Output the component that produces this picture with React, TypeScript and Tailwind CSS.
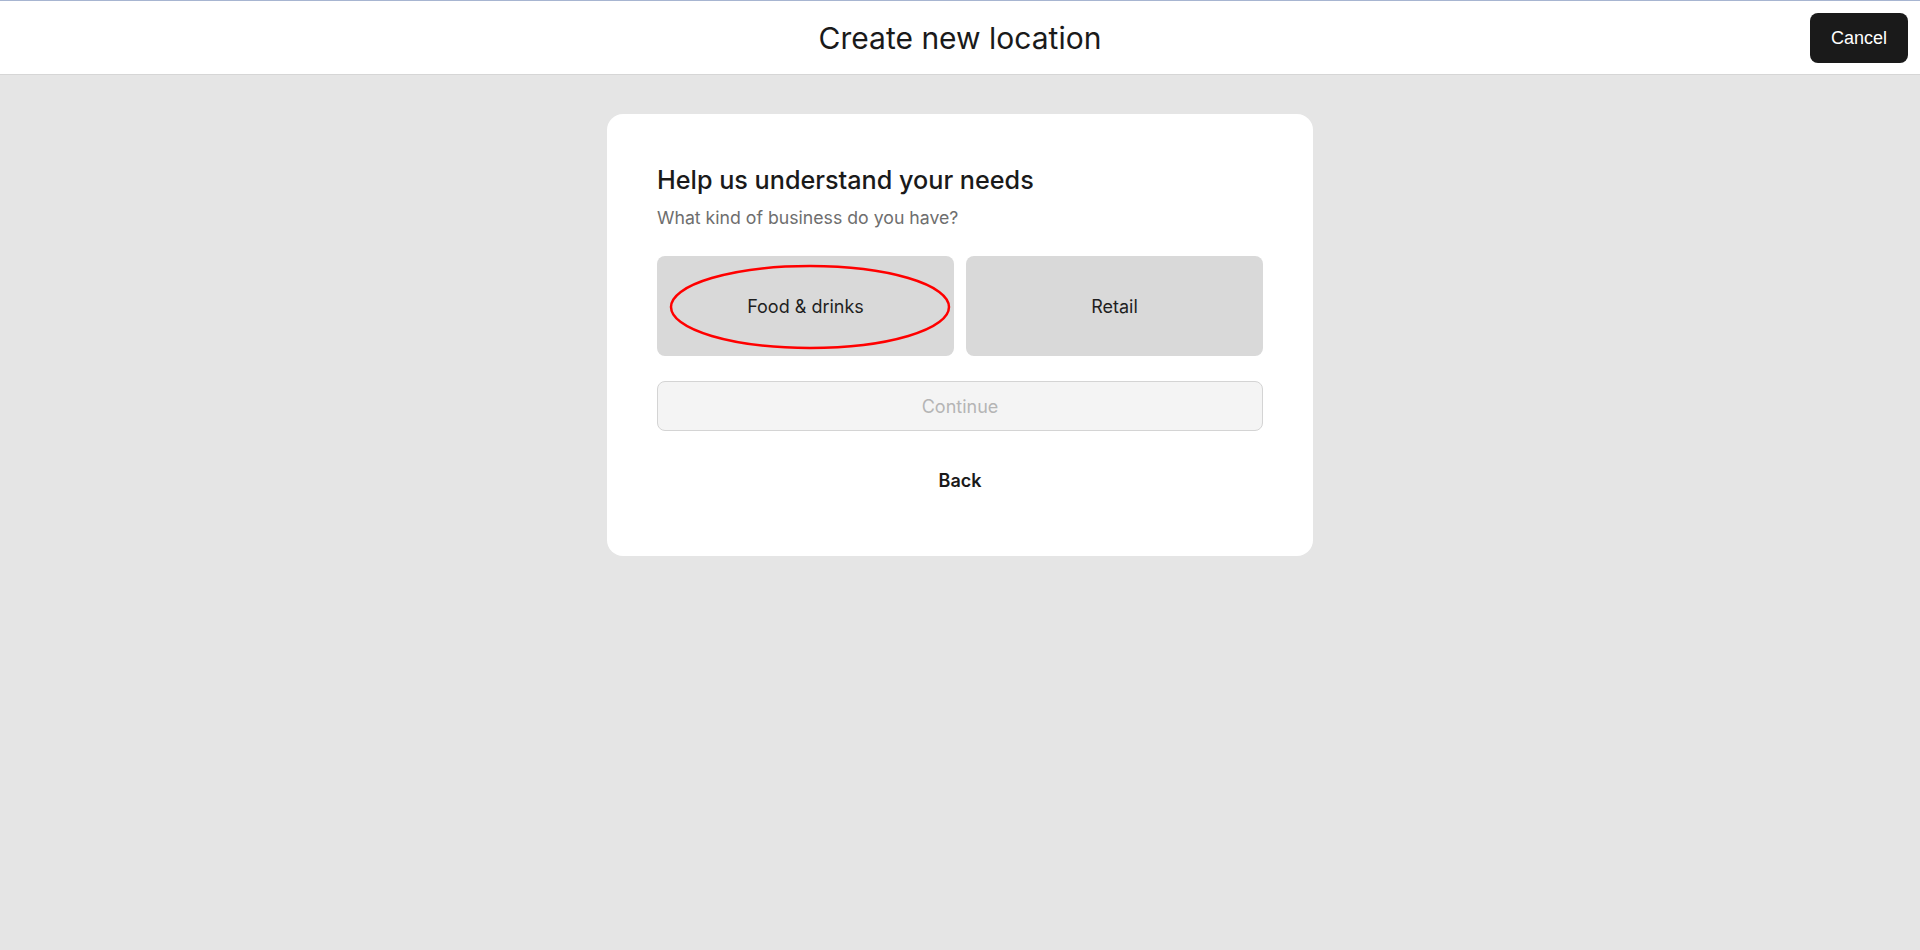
import React from "react";

export default function App() {
  return (
    <div className="min-h-[950px] w-full bg-[#e5e5e5] font-['Inter',sans-serif] text-[#1a1a1a]">
      <header className="relative flex h-[75px] items-center justify-center border-t border-t-[#a7b5d1] border-b border-b-[#d6d6d6] bg-white">
        <h1 className="text-[30px] font-normal leading-none text-[#1a1a1a]">Create new location</h1>
        <button className="absolute right-[12px] top-[12px] flex h-[50px] w-[98px] items-center justify-center rounded-lg bg-[#1a1a1a] font-['Liberation_Sans',Arial,sans-serif] text-[18px] text-white">
          Cancel
        </button>
      </header>
      <main className="flex justify-center pt-[39px]">
        <div className="w-[706px] rounded-[16px] bg-white px-[50px] pt-[50px] pb-[51px]">
          <h2 className="text-[25.2px] font-medium leading-8 text-[#1a1a1a]">Help us understand your needs</h2>
          <p className="mt-[8px] text-[17.7px] leading-7 text-[#6e6e6e]">What kind of business do you have?</p>
          <div className="mt-[24px] grid grid-cols-2 gap-[12px]">
            <button className="relative flex h-[100px] items-center justify-center rounded-lg bg-[#d9d9d9] text-[18px] text-[#1f1f1f]">
              Food &amp; drinks
              <svg className="pointer-events-none absolute left-[12px] top-[8px]" width="282" height="86" viewBox="0 0 282 86">
                <ellipse cx="141" cy="43" rx="139" ry="41" fill="none" stroke="#ff0000" strokeWidth="2.5" />
              </svg>
            </button>
            <button className="flex h-[100px] items-center justify-center rounded-lg bg-[#d9d9d9] text-[18px] text-[#1f1f1f]">
              Retail
            </button>
          </div>
          <button className="mt-[25px] flex h-[50px] w-full items-center justify-center rounded-lg border border-[#d4d4d4] bg-[#f4f4f4] text-[18px] text-[#b5b5b5]">
            Continue
          </button>
          <button className="mt-[24px] flex h-[50px] w-full items-center justify-center text-[18px] font-semibold text-[#1a1a1a]">
            Back
          </button>
        </div>
      </main>
    </div>
  );
}
